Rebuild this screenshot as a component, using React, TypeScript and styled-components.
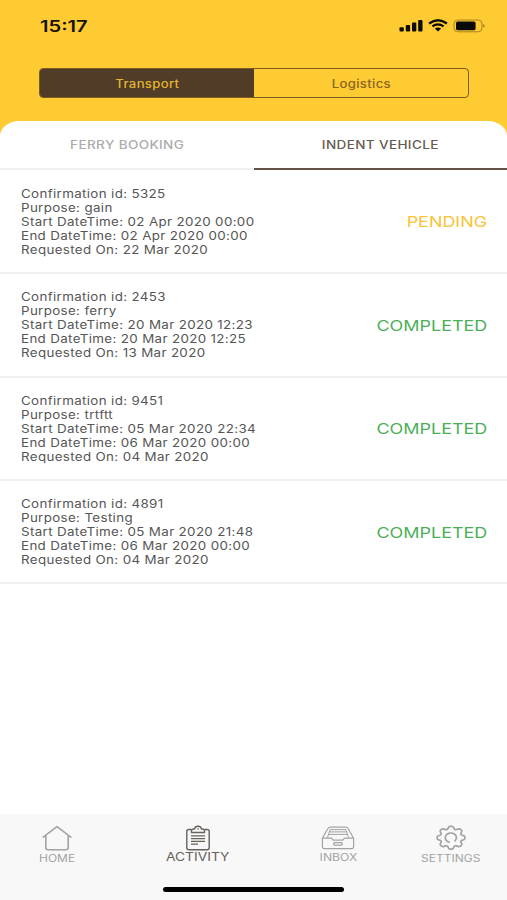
import React from "react";
import styled, { createGlobalStyle } from "styled-components";

const GlobalStyle = createGlobalStyle`
  * { box-sizing: border-box; }
  body { margin: 0; background: #fff; font-family: Inter, "Liberation Sans", sans-serif; }
`;

const Screen = styled.div`
  width: 507px;
  height: 900px;
  display: flex;
  flex-direction: column;
  background: #ffcb32;
  overflow: hidden;
`;

const Label = styled.span<{
  $size: number;
  $wide: number;
  $color: string;
  $weight?: number;
  $origin?: string;
  $track?: number;
}>`
  display: block;
  white-space: nowrap;
  font-size: ${(p) => p.$size}px;
  font-weight: ${(p) => p.$weight ?? 400};
  color: ${(p) => p.$color};
  letter-spacing: ${(p) => p.$track ?? 0}px;
  transform: scaleX(${(p) => p.$wide});
  transform-origin: ${(p) => p.$origin ?? "center"};
`;

const StatusBar = styled.header`
  height: 68px;
  padding: 17px 21px 0 40px;
  display: flex;
  justify-content: space-between;
  align-items: flex-start;
  line-height: 20px;
`;

const StatusIcons = styled.div`
  display: flex;
  svg { display: block; }
`;

const Segments = styled.div`
  flex: none;
  width: 430px;
  height: 30px;
  margin: 0 0 0 39px;
  display: grid;
  grid-template-columns: 214px 1fr;
  border: 1.5px solid #7c5a22;
  border-radius: 4px;
  overflow: hidden;
`;

const Segment = styled.div<{ $active?: boolean }>`
  display: flex;
  align-items: center;
  justify-content: center;
  padding-top: 2px;
  background: ${(p) => (p.$active ? "#503c27" : "transparent")};
`;

const Sheet = styled.main`
  flex: 1;
  min-height: 0;
  margin-top: 23px;
  display: flex;
  flex-direction: column;
  background: #fff;
  border-radius: 19px 19px 0 0 / 15px 15px 0 0;
  overflow: hidden;
`;

const Tabs = styled.div`
  height: 49px;
  flex: none;
  display: grid;
  grid-template-columns: 254px 1fr;
`;

const Tab = styled.div<{ $active?: boolean }>`
  display: flex;
  align-items: center;
  justify-content: center;
  border-bottom: 2px solid ${(p) => (p.$active ? "#665044" : "#f0f0f0")};
`;

const List = styled.div`
  flex: 1;
  padding-top: 0.8px;
`;

const Row = styled.div`
  height: 103.4px;
  padding: 1px 20px 0 20.9px;
  display: flex;
  align-items: center;
  justify-content: space-between;
  border-bottom: 2px solid #f0f0f0;
`;

const Details = styled.div`
  line-height: 14.05px;
`;

const BottomBar = styled.nav`
  height: 86px;
  flex: none;
  background: #f8f8f8;
  display: flex;
  flex-direction: column;
  align-items: center;
`;

const Items = styled.div`
  width: 507px;
  height: 73px;
  display: grid;
  grid-template-columns: 114px 167px 114px 112px;
`;

const Item = styled.div<{ $top: number; $gap?: number }>`
  display: flex;
  flex-direction: column;
  align-items: center;
  gap: ${(p) => p.$gap ?? 1}px;
  padding-top: ${(p) => p.$top}px;
  line-height: 13px;
  svg { display: block; flex: none; }
`;

const HomeIndicator = styled.div`
  width: 181px;
  height: 5px;
  border-radius: 3px;
  background: #000;
`;

type Booking = { id: string; purpose: string; start: string; end: string; on: string; status: string };

const bookings: Booking[] = [
  { id: "5325", purpose: "gain", start: "02 Apr 2020 00:00", end: "02 Apr 2020 00:00", on: "22 Mar 2020", status: "PENDING" },
  { id: "2453", purpose: "ferry", start: "20 Mar 2020 12:23", end: "20 Mar 2020 12:25", on: "13 Mar 2020", status: "COMPLETED" },
  { id: "9451", purpose: "trtftt", start: "05 Mar 2020 22:34", end: "06 Mar 2020 00:00", on: "04 Mar 2020", status: "COMPLETED" },
  { id: "4891", purpose: "Testing", start: "05 Mar 2020 21:48", end: "06 Mar 2020 00:00", on: "04 Mar 2020", status: "COMPLETED" },
];

const DetailLine = ({ children }: { children: React.ReactNode }) => (
  <Label $size={11.4} $wide={1.172} $track={0.3} $color="#565656" $origin="left">{children}</Label>
);

const StatusGlyphs = () => (
  <StatusIcons>
    <svg width="88" height="18" viewBox="0 0 88 18">
      <g fill="#0c0a04">
        <rect x="1.5" y="10.3" width="4.3" height="4.2" rx="1" />
        <rect x="7.8" y="8" width="4.3" height="6.5" rx="1" />
        <rect x="14" y="5.6" width="4.3" height="8.9" rx="1" />
        <rect x="20.2" y="3" width="4.3" height="11.5" rx="1" />
      </g>
      <g fill="none" stroke="#0c0a04">
        <path d="M31.1 6.5Q40 -.2 48.9 6.5" strokeWidth="2.4" />
        <path d="M34.4 9.3Q40 5.3 45.6 9.3" strokeWidth="2.2" />
      </g>
      <path d="M36.8 11.5Q40 9.4 43.2 11.5L40 14.4Z" fill="#0c0a04" />
      <rect x="56" y="3" width="28" height="11.8" rx="3.8" fill="none" stroke="#a98424" />
      <rect x="58" y="4.6" width="19.6" height="8.6" rx="1.6" fill="#0c0a04" />
      <path d="M85 7Q88.5 8.8 85 10.6Z" fill="#a98424" />
    </svg>
  </StatusIcons>
);

const HomeIcon = () => (
  <svg width="32" height="26" viewBox="0 0 32 26" fill="none" stroke="#a3a3a3" strokeWidth="1.6" strokeLinecap="round" strokeLinejoin="round">
    <path d="M2.2 12.2L16 1.6L29.8 12.2M4.8 10.4V22.5Q4.8 24.7 7 24.7H25Q27.2 24.7 27.2 22.5V10.4" />
  </svg>
);

const ActivityIcon = () => (
  <svg width="26" height="26" viewBox="0 0 26 26" fill="none" stroke="#686159" strokeWidth="1.4" strokeLinejoin="round">
    <path d="M6.5 4.5H4Q1.8 4.5 1.8 6.5V22.8Q1.8 24.8 4 24.8H22Q24.2 24.8 24.2 22.8V6.5Q24.2 4.5 22 4.5H19.5" />
    <path d="M6.5 7.5V5.8Q6.5 4 8.8 4H9.6Q10 1.2 13 1.2T16.4 4H17.2Q19.5 4 19.5 5.8V7.5Z" />
    <path d="M6 10.8H20M6 13.6H20M6 16.4H20M6 19.2H13" strokeWidth="1.3" />
    <circle cx="13" cy="4" r=".8" fill="#686159" stroke="none" />
  </svg>
);

const InboxIcon = () => (
  <svg width="34" height="24" viewBox="0 0 34 24" fill="none" stroke="#a3a3a3" strokeWidth="1.2" strokeLinejoin="round">
    <path d="M1.4 12.2L6.6 3Q7.6 1.2 9.6 1.2H24.4Q26.4 1.2 27.4 3L32.6 12.2V20.8Q32.6 22.6 30.6 22.6H3.4Q1.4 22.6 1.4 20.8Z" />
    <path d="M1.8 12.2H10.5L12.3 14.2H21.7L23.5 12.2H32.2" />
    <path d="M9.2 3.6H24.8M9 5.9H25M8 8.4H26M9.2 3.4L6.4 11.8M24.8 3.4L27.6 11.8" strokeWidth="1" />
    <rect x="12.7" y="16.6" width="8.6" height="2.6" rx="1" />
  </svg>
);

// Closed gear outline: eight round lobes joined by narrow notches.
const gearPath = (() => {
  const points: string[] = [];
  for (let deg = 0; deg < 360; deg += 3) {
    const a = (deg * Math.PI) / 180;
    const r = 10 + 1.45 * Math.tanh(1.5 * (Math.cos(8 * a) + 0.25));
    points.push(`${(16 + r * 1.22 * Math.cos(a)).toFixed(2)} ${(12.7 + r * Math.sin(a)).toFixed(2)}`);
  }
  return `M${points.join("L")}Z`;
})();

const SettingsIcon = () => (
  <svg width="32" height="26" viewBox="0 0 32 26" fill="none" stroke="#a3a3a3" strokeWidth="1.7" strokeLinejoin="round" strokeLinecap="round">
    <path d={gearPath} />
    <path d="M14.2 17.2A5.6 4.7 0 1 1 20 15.9" />
  </svg>
);

export default function App() {
  return (
    <>
      <GlobalStyle />
      <Screen>
        <StatusBar>
          <Label $size={15.6} $wide={1.29} $weight={600} $color="#171105" $origin="left">15:17</Label>
          <StatusGlyphs />
        </StatusBar>
        <Segments>
          <Segment $active>
            <Label $size={11.2} $wide={1.17} $track={0.3} $weight={500} $color="#e2b530">Transport</Label>
          </Segment>
          <Segment>
            <Label $size={11.2} $wide={1.17} $track={0.3} $weight={500} $color="#886320">Logistics</Label>
          </Segment>
        </Segments>
        <Sheet>
          <Tabs>
            <Tab><Label $size={11.2} $wide={1.21} $track={0.3} $weight={500} $color="#acacac">FERRY BOOKING</Label></Tab>
            <Tab $active><Label $size={11.2} $wide={1.21} $track={0.3} $weight={500} $color="#665b50">INDENT VEHICLE</Label></Tab>
          </Tabs>
          <List>
            {bookings.map((b) => (
              <Row key={b.id}>
                <Details>
                  <DetailLine>Confirmation id: {b.id}</DetailLine>
                  <DetailLine>Purpose: {b.purpose}</DetailLine>
                  <DetailLine>Start DateTime: {b.start}</DetailLine>
                  <DetailLine>End DateTime: {b.end}</DetailLine>
                  <DetailLine>Requested On: {b.on}</DetailLine>
                </Details>
                <Label $size={14.3} $wide={1.255} $color={b.status === "PENDING" ? "#f7c536" : "#4caf57"} $origin="right">
                  {b.status}
                </Label>
              </Row>
            ))}
          </List>
        </Sheet>
        <BottomBar>
          <Items>
            <Item $top={11}><HomeIcon /><Label $size={10} $wide={1.2} $color="#a3a3a3">HOME</Label></Item>
            <Item $top={11} $gap={0}><ActivityIcon /><Label $size={11.6} $wide={1.19} $color="#686159">ACTIVITY</Label></Item>
            <Item $top={12}><InboxIcon /><Label $size={10} $wide={1.22} $color="#a3a3a3">INBOX</Label></Item>
            <Item $top={11}><SettingsIcon /><Label $size={10} $wide={1.2} $color="#a3a3a3">SETTINGS</Label></Item>
          </Items>
          <HomeIndicator />
        </BottomBar>
      </Screen>
    </>
  );
}
